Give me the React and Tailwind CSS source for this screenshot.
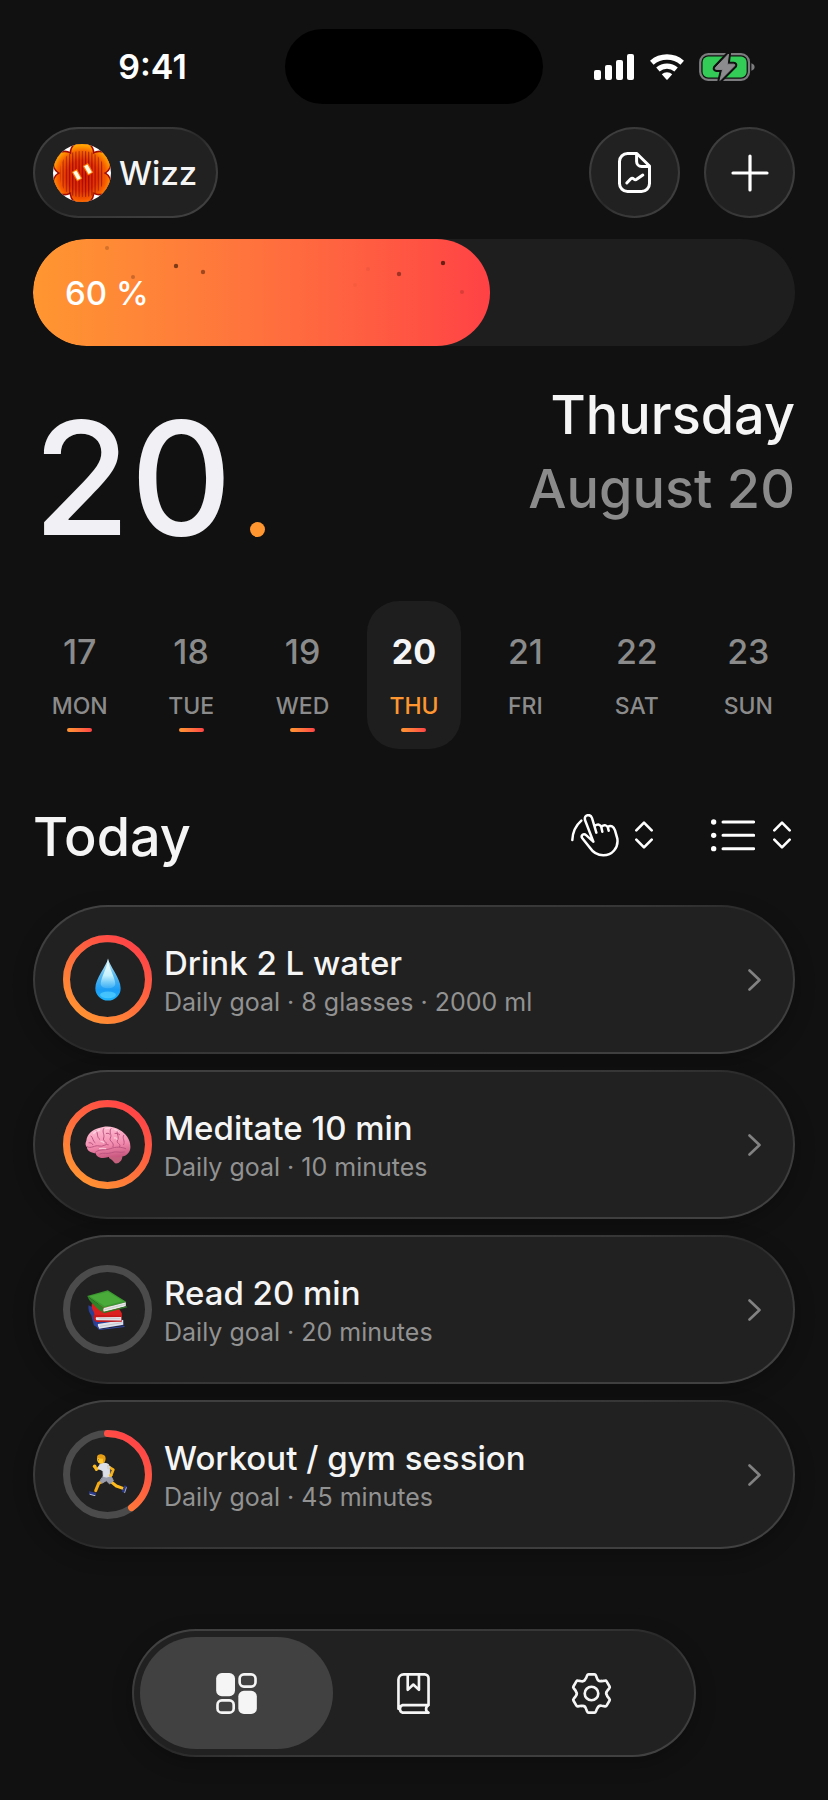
import React from "react";

const GLASS =
  "border-2 border-transparent [background:linear-gradient(#212121,#212121)_padding-box,linear-gradient(to_bottom_right,#434343_0%,#363636_40%,#282828_50%,#363636_60%,#434343_100%)_border-box]";

const days = [
  { date: 17, label: "MON", done: true },
  { date: 18, label: "TUE", done: true },
  { date: 19, label: "WED", done: true },
  { date: 20, label: "THU", done: true, active: true },
  { date: 21, label: "FRI" },
  { date: 22, label: "SAT" },
  { date: 23, label: "SUN" },
];

function Signal() {
  return (
    <svg width="41" height="26" viewBox="0 0 41 26" fill="#fff" aria-hidden="true">
      <rect x="0" y="16" width="7" height="10" rx="2" />
      <rect x="11" y="11" width="7" height="15" rx="2" />
      <rect x="22" y="6" width="7" height="20" rx="2" />
      <rect x="33" y="0" width="7" height="26" rx="2" />
    </svg>
  );
}

function Wifi() {
  return (
    <svg width="34" height="26" viewBox="0 0 34 26" fill="none" stroke="#fff" aria-hidden="true">
      <path d="M1.8 8.7A23.2 23.2 0 0 1 32.2 8.7" strokeWidth="5.4" />
      <path d="M7.9 15.5A14 14 0 0 1 26.1 15.5" strokeWidth="5.2" />
      <path d="M11.8 20.2A8.2 8.2 0 0 1 22.2 20.2L17.6 25.4Q17 26 16.4 25.4Z" fill="#fff" stroke="none" />
    </svg>
  );
}

function Battery() {
  const bolt = "M29.5 1 16.4 14.8Q15.8 16.4 17.2 16.4H23.6L21 27.4 35.6 12.8Q36.2 11.2 34.8 11.2H28.2Z";
  return (
    <svg width="56" height="28" viewBox="0 0 56 28" fill="none" aria-hidden="true">
      <rect x="1.2" y="1.2" width="48.8" height="25.6" rx="8" stroke="#7c7c7f" strokeWidth="2.2" />
      <rect x="3.6" y="3.6" width="44" height="20.8" rx="5.5" fill="#32cc57" />
      <path d="M52.4 10.3Q55.6 11.4 55.6 14T52.4 17.7Z" fill="#7c7c7f" />
      <path d={bolt} fill="#111" stroke="#111" strokeWidth="5" strokeLinejoin="round" />
      <path d={bolt} fill="#8c8c8f" stroke="#8c8c8f" strokeWidth="1" strokeLinejoin="round" />
    </svg>
  );
}

function Avatar() {
  const lobes = [0, 60, 120, 180, 240, 300];
  return (
    <svg width="58" height="58" viewBox="0 0 58 58" aria-hidden="true">
      <defs>
        <clipPath id="face"><circle cx="29" cy="29" r="29" /></clipPath>
        <radialGradient id="flame" gradientUnits="userSpaceOnUse" cx="29" cy="32" r="31">
          <stop offset="0" stopColor="#d01000" />
          <stop offset="0.5" stopColor="#e02600" />
          <stop offset="0.78" stopColor="#f65c00" />
          <stop offset="1" stopColor="#ffa800" />
        </radialGradient>
        <pattern id="ribs" width="3.2" height="58" patternUnits="userSpaceOnUse">
          <rect width="1" height="58" fill="#5c0000" fillOpacity="0.5" />
          <rect x="2" width="0.6" height="58" fill="#ff7a1a" fillOpacity="0.35" />
        </pattern>
      </defs>
      <g clipPath="url(#face)">
        <rect width="58" height="58" fill="#fff" />
        <g fill="#a50a00">
          <circle cx="29" cy="29" r="23.5" />
          {lobes.map((a) => (
            <circle key={a} cx="29" cy="9" r="12.4" transform={`rotate(${a} 29 29)`} />
          ))}
        </g>
        <circle cx="29" cy="29" r="21.5" fill="url(#flame)" />
        {lobes.map((a) => {
          const t = (a * Math.PI) / 180;
          return <circle key={a} cx={29 + 20 * Math.sin(t)} cy={29 - 20 * Math.cos(t)} r="10.8" fill="url(#flame)" />;
        })}
        <rect x="7" y="7" width="44" height="46" rx="20" fill="url(#ribs)" />
        <path d="M21.3 26.5 26.7 36M32.3 20.5 37.7 30" stroke="#ff7a00" strokeWidth="6" />
        <path d="M21.8 27.3 26.2 35.2M32.8 21.3 37.2 29.2" stroke="#fffbe8" strokeWidth="3.8" />
      </g>
    </svg>
  );
}

function FileChart() {
  return (
    <svg width="33" height="41" viewBox="0 0 33 41" fill="none" stroke="#fff" strokeWidth="3" strokeLinecap="round" strokeLinejoin="round" aria-hidden="true">
      <path d="M18.8 1.5H9.5a8 8 0 0 0-8 8v22a8 8 0 0 0 8 8h14a8 8 0 0 0 8-8V14Z" />
      <path d="M18.6 2v7.5a5 5 0 0 0 5 5H31" />
      <path d="M8.8 31l3.8-4q1.6-1.5 3.2 0t3.2 0L24.8 23" />
    </svg>
  );
}

function Plus() {
  return (
    <svg width="38" height="38" viewBox="0 0 38 38" stroke="#fff" strokeWidth="3.2" strokeLinecap="round" aria-hidden="true">
      <path d="M19 2V36M2 19H36" />
    </svg>
  );
}

function HandSwipe() {
  return (
    <svg width="48" height="43" viewBox="0 0 144 129" fill="none" stroke="#fff" strokeWidth="7.5" strokeLinecap="round" strokeLinejoin="round" aria-hidden="true">
      <path d="M4 78C5 55 15 34 31 20" />
      <path d="M67 83 42 18C38 1 59-1 63 12L76 56M71 36C80 29 89 31 91 40L94 53M91 39C100 30 109 34 111 42L113 50M110 39C120 32 128 37 132 49L139 74C143 102 123 124 97 124C78 124 65 114 55 99L34 73C28 64 38 57 46 64L67 83" />
    </svg>
  );
}

function UpDown() {
  return (
    <svg width="18" height="28" viewBox="0 0 54 84" fill="none" stroke="#fff" strokeWidth="8" strokeLinecap="round" strokeLinejoin="round" aria-hidden="true">
      <path d="M4 28 27 5 50 28M4 56 27 79 50 56" />
    </svg>
  );
}

function ListIcon() {
  return (
    <svg width="44" height="33" viewBox="0 0 132 99" fill="#fff" stroke="#fff" aria-hidden="true">
      <g stroke="none">
        <circle cx="8" cy="9" r="8" />
        <circle cx="8" cy="49" r="8" />
        <circle cx="8" cy="89" r="8" />
      </g>
      <path d="M36 9H128M36 49H128M36 89H128" strokeWidth="9" strokeLinecap="round" />
    </svg>
  );
}

function Dashboard() {
  return (
    <svg width="41" height="41" viewBox="0 0 123 124" fill="#f5f5f5" aria-hidden="true">
      <rect width="57" height="70" rx="17" />
      <rect x="67" y="54" width="56" height="70" rx="17" />
      <g fill="none" stroke="#f5f5f5" strokeWidth="8">
        <rect x="71" y="4" width="48" height="37" rx="13" />
        <rect x="4" y="83" width="49" height="37" rx="13" />
      </g>
    </svg>
  );
}

function Book() {
  return (
    <svg width="33" height="41" viewBox="0 0 99 124" fill="none" stroke="#f5f5f5" strokeWidth="8" strokeLinejoin="round" strokeLinecap="round" aria-hidden="true">
      <path d="M4 108V20a16 16 0 0 1 16-16H83a12 12 0 0 1 12 12V97H17a12 12 0 0 0 0 23H95C85 115 85 103 95 97" />
      <path d="M32 4V51L49 35 66 51V4" />
    </svg>
  );
}

// Six-tooth gear outline, one rotated tooth at a time.
const gearPath =
  [0, 60, 120, 180, 240, 300]
    .map((deg, i) => {
      const a = (deg * Math.PI) / 180;
      const p = (x, y) =>
        `${(x * Math.cos(a) - y * Math.sin(a)).toFixed(1)} ${(x * Math.sin(a) + y * Math.cos(a)).toFixed(1)}`;
      return `${i ? "L" : "M"}${p(-17, -45)}L${p(-13, -55)}Q${p(-12, -58)} ${p(-9, -58)}L${p(9, -58)}Q${p(12, -58)} ${p(13, -55)}L${p(17, -45)}Q${p(20, -36)} ${p(30, -38)}`;
    })
    .join("") + "Z";

function Gear() {
  return (
    <svg width="41" height="41" viewBox="-62 -62 124 124" fill="none" stroke="#f5f5f5" strokeWidth="8" strokeLinejoin="round" aria-hidden="true">
      <path d={gearPath} />
      <circle r="20.5" />
    </svg>
  );
}

function Drop() {
  return (
    <svg width="26" height="43" viewBox="0 0 78 128">
      <defs>
        <linearGradient id="dropBody" x1="0" y1="0" x2="0" y2="1">
          <stop offset="0" stopColor="#c9f2ff" />
          <stop offset="0.4" stopColor="#58b8ee" />
          <stop offset="0.75" stopColor="#1b9df5" />
          <stop offset="1" stopColor="#1fb4fb" />
        </linearGradient>
        <linearGradient id="dropShine" x1="0" y1="0" x2="0" y2="1">
          <stop offset="0" stopColor="#fff" />
          <stop offset="0.55" stopColor="#c3f1ff" />
          <stop offset="1" stopColor="#7ad3fb" stopOpacity="0.3" />
        </linearGradient>
      </defs>
      <path d="M39 1C44 25 77 60 77 90A38 37 0 0 1 1 90C1 60 34 25 39 1Z" fill="url(#dropBody)" />
      <path d="M39 6C42 30 60 55 61 78Q58 90 39 90T17 78C18 55 36 30 39 6Z" fill="url(#dropShine)" />
      <ellipse cx="39" cy="110" rx="24" ry="10" fill="#5fd6ff" opacity="0.6" />
    </svg>
  );
}

function Brain() {
  return (
    <svg width="46" height="38" viewBox="0 0 138 114">
      <defs>
        <linearGradient id="brainBody" x1="0.3" y1="0" x2="0.5" y2="1">
          <stop offset="0" stopColor="#ffc0d4" />
          <stop offset="0.6" stopColor="#f28bae" />
          <stop offset="1" stopColor="#c9577f" />
        </linearGradient>
      </defs>
      <path d="M72 86Q84 82 108 84Q116 92 108 104Q100 114 90 112Q84 102 72 96Z" fill="#c5607f" />
      <path d="M4 44C6 26 22 10 42 6C60-2 88 0 104 12C122 22 136 40 136 60C138 76 126 90 110 92C92 96 80 90 68 94C50 100 34 94 32 82C16 80 6 74 6 64C0 58 1 50 4 44Z" fill="url(#brainBody)" />
      <path d="M30 80C40 68 60 74 76 68S108 62 122 68M6 62C18 70 30 56 42 60S62 52 70 56M18 30C26 36 22 46 30 50M34 14C40 24 34 32 44 40M56 8C50 18 60 26 56 36S66 46 64 54M78 8C70 18 82 26 76 36S90 48 84 62M98 14C92 24 104 30 98 42S110 52 104 62M116 28C110 36 122 46 116 56M44 84C56 78 66 86 80 80S104 82 118 78M12 50Q20 48 24 56M90 22Q98 20 104 26M64 22Q70 20 74 24" fill="none" stroke="#bd5580" strokeWidth="3" strokeLinecap="round" />
      <path d="M26 22Q34 14 44 12M62 8Q68 6 74 6M88 10Q96 12 100 16M48 46Q54 46 56 50M88 36Q94 34 96 40M44 68Q54 66 62 68" fill="none" stroke="#ffe0ea" strokeWidth="4" strokeLinecap="round" opacity="0.7" />
    </svg>
  );
}

function Books() {
  return (
    <svg width="41" height="40" viewBox="0 0 122 120">
      <path d="M4 46Q2 64 12 76L20 106 36 116 110 106 108 90 70 76Z" fill="#2b3f94" />
      <path d="M32 102 108 90 108 104 36 116Q30 110 32 102Z" fill="#dfe2e8" />
      <path d="M28 96 36 118 112 108V111L36 120Q26 112 28 96Z" fill="#3148a8" />
      <path d="M14 40Q12 56 20 66L26 90 104 92V70L92 50Z" fill="#dc2020" />
      <path d="M26 80 102 80V92L26 92Q22 86 26 80Z" fill="#e6e6ea" />
      <path d="M20 74 102 77V81L26 82Q24 88 28 91L104 92V95L28 96Q16 88 20 74Z" fill="#c81818" />
      <path d="M0 18 62 1 118 36 50 54Z" fill="#3c9a30" />
      <path d="M8 19 62 5 108 34 52 48Z" fill="#4aab3b" />
      <path d="M0 18 50 54 46 67Q30 58 6 30Z" fill="#2f8427" />
      <path d="M50 54 116 37V49L50 66Q46 60 50 54Z" fill="#e8eae6" />
      <path d="M50 65 118 49 121 52 50 70 44 64Z" fill="#2d7d26" />
      <path d="M52 59 114 43M34 86H100M38 109 106 98" stroke="#a9adb3" strokeWidth="1.5" />
    </svg>
  );
}

function Runner() {
  return (
    <svg width="38" height="42" viewBox="0 0 114 126" fill="none" strokeLinecap="round" strokeLinejoin="round">
      <path d="M46 78 29 88 20 110" stroke="#f4ab16" strokeWidth="9" />
      <path d="M62 80 82 96 102 103" stroke="#fdbb1e" strokeWidth="9" />
      <path d="M2 113 20 118 19 124 0 119Z" fill="#2c3c8c" stroke="#2c3c8c" strokeWidth="2" />
      <path d="M3 121 18 125" stroke="#dfe4f2" strokeWidth="2.5" />
      <path d="M108 96 113 98 106 115 101 113Z" fill="#2c3c8c" stroke="#2c3c8c" strokeWidth="3" />
      <path d="M112 101 107 116" stroke="#dfe4f2" strokeWidth="2" />
      <path d="M44 66 66 66 73 80 62 90 52 80 38 88 34 80Z" fill="#9a9dab" stroke="#9a9dab" strokeWidth="3" />
      <path d="M36 36 22 47 17 38" stroke="#fdbb1e" strokeWidth="8" />
      <circle cx="17" cy="37" r="5.5" fill="#fdbb1e" />
      <path d="M34 30Q46 24 58 31L62 44 63 66Q52 72 43 67L42 50 28 44Z" fill="#dcdfe8" stroke="#dcdfe8" strokeWidth="3" />
      <path d="M58 38 73 47 67 62" stroke="#f6b01a" strokeWidth="8" />
      <circle cx="65" cy="64" r="5" fill="#fdbb1e" />
      <path d="M55 32 65 38 60 47 54 44Z" fill="#cfd3de" />
      <ellipse cx="36" cy="16" rx="12" ry="13.5" fill="#ffc62e" />
      <path d="M24 11Q24 1 36 1Q50 2 50 14Q50 22 44 27Q40 22 42 14Q32 14 24 11Z" fill="#e89e12" />
      <circle cx="28" cy="17" r="1.5" fill="#5b3a0a" />
    </svg>
  );
}

const habits = [
  { title: "Drink 2 L water", goal: "Daily goal · 8 glasses · 2000 ml", progress: 1, Icon: Drop },
  { title: "Meditate 10 min", goal: "Daily goal · 10 minutes", progress: 1, Icon: Brain },
  { title: "Read 20 min", goal: "Daily goal · 20 minutes", progress: 0, Icon: Books },
  { title: "Workout / gym session", goal: "Daily goal · 45 minutes", progress: 0.4, Icon: Runner },
];

function Ring({ progress, id }) {
  return (
    <svg width="89" height="89" viewBox="0 0 89 89" fill="none" strokeWidth="7" className="[grid-area:1/1]" aria-hidden="true">
      <defs>
        <linearGradient id={id} gradientUnits="userSpaceOnUse" x1="16" y1="84" x2="70" y2="12">
          <stop offset="0" stopColor="#ff9531" />
          <stop offset="1" stopColor="#ff4646" />
        </linearGradient>
      </defs>
      <circle cx="44.5" cy="44.5" r="41" stroke="#4b4b4b" />
      {progress > 0 && (
        <path
          d="M44.5 3.5A41 41 0 0 1 44.5 85.5A41 41 0 0 1 44.5 3.5"
          pathLength="100"
          stroke={`url(#${id})`}
          strokeLinecap="round"
          strokeDasharray={`${progress * 100} 100`}
        />
      )}
    </svg>
  );
}

function HabitCard({ habit, index }) {
  const { title, goal, progress, Icon } = habit;
  return (
    <li>
      <button type="button" className={`flex h-[149px] w-full items-center gap-3 rounded-full pr-8 pl-7 text-left shadow-[0_6px_20px_rgba(0,0,0,0.25)] ${GLASS}`}>
        <span className="grid shrink-0 place-items-center">
          <Ring progress={progress} id={`ring-${index}`} />
          <span className="[grid-area:1/1]" aria-hidden="true"><Icon /></span>
        </span>
        <span className="flex min-w-0 flex-1 flex-col gap-[5px] pt-1">
          <span className="text-[33px] leading-9 font-medium text-[#f5f5f5]">{title}</span>
          <span className="text-[25px] leading-8 text-[#929292]">{goal}</span>
        </span>
        <svg width="13" height="22" viewBox="0 0 13 22" fill="none" stroke="#828282" strokeWidth="2.6" strokeLinecap="round" strokeLinejoin="round" aria-hidden="true">
          <path d="M1.5 1.5 11.5 11 1.5 20.5" />
        </svg>
      </button>
    </li>
  );
}

const specks = [
  [74, 9, 2, 0.2],
  [100, 38, 2, 0.25],
  [143, 27, 2.2, 0.6],
  [170, 33, 2.2, 0.45],
  [335, 30, 2, 0.06],
  [322, 46, 2, 0.04],
  [366, 35, 2.2, 0.45],
  [410, 24, 2.2, 0.7],
  [429, 53, 2, 0.18],
];

export default function App() {
  return (
    <div className="min-h-screen bg-[#111111] pt-[29px] pb-[43px] font-['Inter','Liberation_Sans',sans-serif] text-white">
      <div className="grid grid-cols-[1fr_258px_1fr] items-center">
        <div className="pl-5 text-center text-[34px] leading-10 font-semibold">9:41</div>
        <div className="h-[75px] rounded-full bg-black" />
        <div className="flex items-center justify-center gap-[15px] pr-[22px]">
          <Signal />
          <Wifi />
          <Battery />
        </div>
      </div>

      <main className="px-[33px]">
        <header className="mt-[23px] flex items-center justify-between">
          <button type="button" className={`flex h-[91px] items-center gap-2 rounded-full pr-[19px] pl-[18px] ${GLASS}`}>
            <Avatar />
            <span className="text-[33px] leading-10 font-medium text-[#f5f5f5]">Wizz</span>
          </button>
          <div className="flex gap-6">
            <button type="button" aria-label="Report" className={`grid size-[91px] place-items-center rounded-full ${GLASS}`}><FileChart /></button>
            <button type="button" aria-label="Add habit" className={`grid size-[91px] place-items-center rounded-full ${GLASS}`}><Plus /></button>
          </div>
        </header>

        <div role="progressbar" aria-valuenow={60} aria-valuemin={0} aria-valuemax={100} aria-label="Daily progress" className="mt-[21px] h-[107px] overflow-hidden rounded-full bg-[#1e1e1e]">
          <div className="relative flex h-full w-3/5 items-center rounded-full bg-linear-to-r from-[#ff9630] to-[#ff4145] pl-8">
            <svg className="absolute inset-0" width="457" height="107" viewBox="0 0 457 107" aria-hidden="true">
              {specks.map(([x, y, r, o]) => (
                <circle key={x} cx={x} cy={y} r={r} fill="#2a0c00" fillOpacity={o} />
              ))}
            </svg>
            <span className="relative text-[33px] leading-10 font-medium">60 %</span>
          </div>
        </div>

        <section className="mt-8 flex items-end justify-between">
          <div className="flex items-end gap-[18px]">
            <span className="text-[158px] leading-[160px] font-medium text-[#f1f1f5]">20</span>
            <span className="mb-[21px] size-[15px] rounded-full bg-[#ff9630]" />
          </div>
          <div className="pb-8 text-right text-[54px] leading-[74px] font-medium">
            <p className="text-[#f5f5f5]">Thursday</p>
            <p className="text-[#8b8b8b]">August 20</p>
          </div>
        </section>

        <div className="-mx-[9px] mt-[43px] grid grid-cols-7">
          {days.map((d) => (
            <button
              key={d.date}
              type="button"
              aria-pressed={!!d.active}
              className={`mx-auto flex h-[148px] w-[94px] flex-col items-center rounded-[32px] pt-8 ${d.active ? "bg-[#1e1e1e]" : ""}`}
            >
              <span className={`text-[34px] leading-[38px] ${d.active ? "font-bold text-[#f5f5f5]" : "font-medium text-[#8b8b8b]"}`}>{d.date}</span>
              <span className={`mt-[21px] text-[23px] leading-7 font-medium ${d.active ? "text-[#ff9630]" : "text-[#8b8b8b]"}`}>{d.label}</span>
              {d.done && <span className="mt-2 h-1 w-[25px] rounded-full bg-linear-to-r from-[#ff9630] to-[#ff4145]" />}
            </button>
          ))}
        </div>

        <div className="mt-14 flex items-center justify-between">
          <h1 className="text-[54px] leading-[64px] font-medium text-[#f5f5f5]">Today</h1>
          <div className="flex items-center gap-[58px] pr-1 pb-1">
            <button type="button" aria-label="Filter by gesture" className="flex items-center gap-4"><HandSwipe /><UpDown /></button>
            <button type="button" aria-label="View mode" className="flex items-center gap-[18px]"><ListIcon /><UpDown /></button>
          </div>
        </div>

        <ul className="mt-9 flex flex-col gap-4">
          {habits.map((h, i) => (
            <HabitCard key={h.title} habit={h} index={i} />
          ))}
        </ul>
      </main>

      <nav className={`mx-auto mt-20 grid h-32 w-full max-w-[564px] grid-cols-[6fr_5fr_6fr] rounded-full p-1.5 shadow-[0_6px_20px_rgba(0,0,0,0.25)] ${GLASS}`}>
        <a href="#dashboard" aria-label="Dashboard" aria-current="page" className="grid place-items-center rounded-full bg-[#414141]"><Dashboard /></a>
        <a href="#journal" aria-label="Journal" className="grid place-items-center"><Book /></a>
        <a href="#settings" aria-label="Settings" className="grid place-items-center"><Gear /></a>
      </nav>
    </div>
  );
}
